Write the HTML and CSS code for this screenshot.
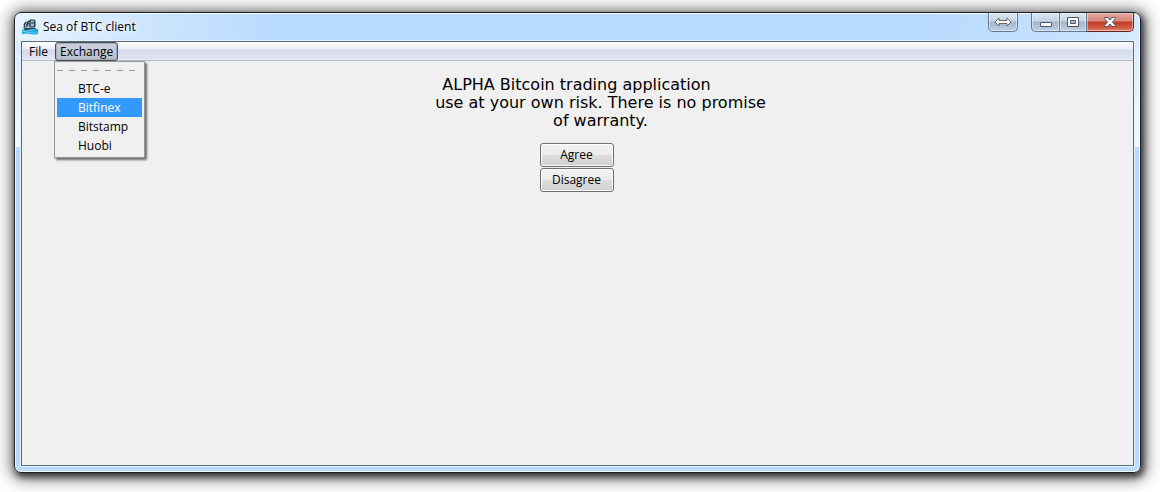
FILE: index.html
```html
<!DOCTYPE html>
<html lang="en">
<head>
<meta charset="utf-8">
<title>Sea of BTC client</title>
<link rel="stylesheet" href="styles.css">
</head>
<body>
<div class="window">
  <header class="titlebar">
    <svg class="app-icon" width="16" height="16" viewBox="0 0 16 16" aria-hidden="true">
      <path d="M3 3 L6 1 H13 L14 4 L13 9 H3 Z" fill="#a9c3d8"/>
      <path d="M4 3 Q1 6 3 8 M7 2 Q4 5 5 8 M5 5 H8 M8 1 V8 M8 1 H12 Q14 3 12 4 H9 M12 4 Q14 6 12 8 H8" fill="none" stroke="#1c3145" stroke-width="1.2"/>
      <path d="M1 8 L5 9 H14 L12 12 H3 Z" fill="#2c4a62"/>
      <path d="M0 10 Q3 12 6 11 T11 10 T16 10 V15 Q12 16 8 15 T0 15 Z" fill="#1ba4e2"/>
      <path d="M0 12 Q3 13 6 12 T12 11 M4 14 Q7 13 10 14 T15 13" fill="none" stroke="#6bd5f5"/>
    </svg>
    <h1 class="title">Sea of BTC client</h1>
    <div class="controls">
      <button class="cap cap-span" aria-label="Span displays">
        <svg width="18" height="10" viewBox="0 0 18 10"><path d="M1 5 L5 1 V3.5 H13 V1 L17 5 L13 9 V6.500 H5 V9 Z" fill="#fff" stroke="#68686c"/></svg>
      </button>
      <div class="cap-group">
        <button class="cap cap-min" aria-label="Minimize">
          <svg width="12" height="12" viewBox="0 0 12 12"><rect x=".5" y="6.500" width="11" height="4" rx=".5" fill="#fff" stroke="#535666"/></svg>
        </button>
        <button class="cap cap-max" aria-label="Maximize">
          <svg width="12" height="12" viewBox="0 0 12 12"><path fill-rule="evenodd" d="M.5 1.500 H11.500 V10.500 H.5 Z M3.500 4.500 V7.500 H8.500 V4.500 Z" fill="#fff" stroke="#535666"/></svg>
        </button>
        <button class="cap cap-close" aria-label="Close">
          <svg width="12" height="12" viewBox="0 0 12 12"><path d="M.5 1.500 H4 L6 4 L8 1.500 H11.500 V2.500 L8.500 6 L11.500 9.500 V10.500 H8 L6 8 L4 10.500 H.5 V9.500 L3.500 6 L.5 2.500 Z" fill="#fff" stroke="#535666"/></svg>
        </button>
      </div>
    </div>
  </header>
  <div class="client">
    <nav class="menubar">
      <button class="menu-button">File</button>
      <div class="menu">
        <button class="menu-button menu-button-open" aria-expanded="true">Exchange</button>
        <div class="dropdown">
          <svg class="tearoff" width="84" height="1" aria-hidden="true"><path d="M0 .5 H79" stroke="#999" stroke-dasharray="6 6"/></svg>
          <button class="item">BTC-e</button>
          <button class="item item-selected">Bitfinex</button>
          <button class="item">Bitstamp</button>
          <button class="item">Huobi</button>
        </div>
      </div>
    </nav>
    <main class="page">
      <p class="notice">ALPHA Bitcoin trading application</p>
      <p class="notice notice-indent">use at your own risk. There is no promise<br>of warranty.</p>
      <div class="actions">
        <button class="action">Agree</button>
        <button class="action">Disagree</button>
      </div>
    </main>
  </div>
</div>
</body>
</html>
```
FILE: styles.css
```css
* { box-sizing: border-box; }
body {
  margin: 0;
  padding: 12px 19px 19px 14px;
  min-height: 100vh;
  display: flex;
  background: #fff;
  color: #000;
  font: 12px/16px "Open Sans", "Noto Sans", sans-serif;
}
button { margin: 0; padding: 0; border: 0; background: none; font: inherit; color: inherit; }
svg { display: block; }
.window {
  flex: 1;
  display: flex;
  flex-direction: column;
  padding: 0 6px 6px;
  border: 1px solid #1b222b;
  border-radius: 7px;
  background:
    linear-gradient(100deg, #e6f3ff 0, #cfe6fe 120px, #b9dbfd 260px, #b9dbfd 800px, #b9dbfd 900px, #c4e1fd 1040px, #d8ebfe 100%) 0 0 / 100% 28px no-repeat,
    linear-gradient(#d3e9fe 0, #f4f9ff 134px, #b9dafb 134px);
  box-shadow: inset 0 0 0 1px #f4faff, 2px 3px 6px 1px rgba(0,0,0,.6), 1px 2px 16px 4px rgba(0,0,0,.55);
}
.titlebar { height: 28px; display: flex; align-items: flex-start; padding-left: 1px; }
.app-icon { margin-top: 6px; }
.title { margin: 6px 0 0 5px; font-size: 12px; font-weight: 400; text-shadow: 0 0 6px #fff, 0 0 10px #fff; }
.controls { margin-left: auto; display: flex; gap: 13px; }
.cap-group { display: flex; }
.cap {
  height: 19px;
  display: flex;
  align-items: center;
  justify-content: center;
  border: 1px solid #65788d;
  border-top: 0;
  background: linear-gradient(#dae6f2 0, #c4d3e3 45%, #9fb5cd 50%, #bdd1e5 100%);
  box-shadow: inset 0 0 0 1px rgba(255,255,255,.45);
}
.cap-span { width: 30px; border-radius: 0 0 5px 5px; }
.cap-min { width: 29px; border-radius: 0 0 0 5px; }
.cap-max { width: 27px; border-left: 0; }
.cap-close {
  width: 47px;
  border-color: #69201f;
  border-left: 0;
  border-radius: 0 0 5px 0;
  background: linear-gradient(#e5a59b 0, #d7897b 45%, #bf3a26 50%, #cf5841 80%, #df8a6b 100%);
}
.client {
  flex: 1;
  display: flex;
  flex-direction: column;
  border: 1px solid #5d6c7d;
  background: #f0f0f0;
  box-shadow: 0 0 0 1px #e3f1ff;
}
.menubar {
  height: 19px;
  display: flex;
  border-bottom: 1px solid #b6bccc;
  background: linear-gradient(#fff 0, #e9ecf5 7px, #d4daeb 8px, #e1e6f6 18px);
}
.menu { position: relative; }
.menu-button { height: 19px; padding: 1px 6px 0; border: 1px solid transparent; }
.menu-button-open {
  padding: 1px 4px 0;
  border-color: #4b4e57;
  border-radius: 3px;
  background: linear-gradient(#cfd3df, #b7bdcb);
  box-shadow: inset 0 0 1px 1px #a4aab8;
}
.dropdown {
  position: absolute;
  left: -1px;
  top: 19px;
  min-width: 91px;
  padding: 2px 2px 2px;
  border: 1px solid #979797;
  background: #f0f0f0;
  box-shadow: 2px 2px 2px rgba(0,0,0,.55);
}
.tearoff { margin: 6px 0 8px; }
.item { display: block; width: 100%; height: 19px; padding-left: 21px; text-align: left; }
.item-selected { background: #3399ff; color: #fff; }
.page { flex: 1; padding: 15px 2px 0 0; text-align: center; }
.notice { margin: 0; font: 16px/18px "DejaVu Sans", sans-serif; }
.notice-indent { padding-left: 48px; }
.actions { display: flex; flex-direction: column; align-items: center; gap: 1px; margin-top: 13px; }
.action {
  width: 74px;
  height: 24px;
  border: 1px solid #707070;
  border-radius: 3px;
  background: linear-gradient(#f2f2f2 0, #ebebeb 49%, #dddddd 50%, #cfcfcf 100%);
  box-shadow: inset 0 0 0 1px #fafafa;
}
```
